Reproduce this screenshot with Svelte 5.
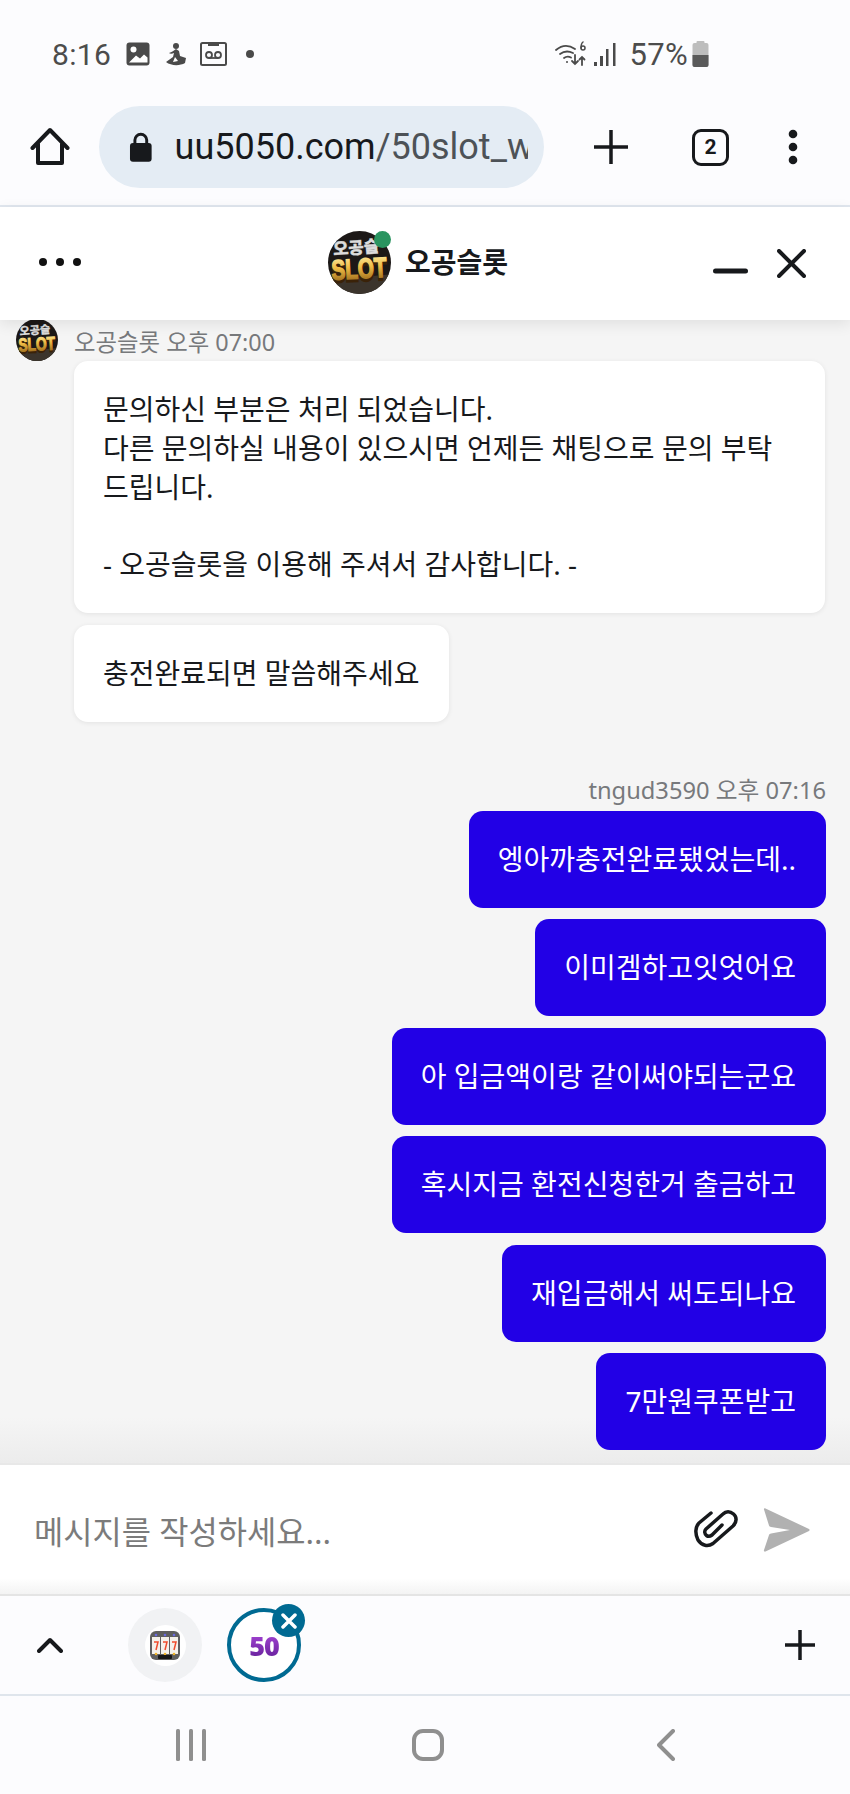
<script>
  const mine = ['엥아까충전완료됐었는데..', '이미겜하고잇엇어요', '아 입금액이랑 같이써야되는군요', '혹시지금 환전신청한거 출금하고', '재입금해서 써도되나요', '7만원쿠폰받고'];
</script>

{#snippet slotLogo(size)}
  <svg class="logo" width={size} height={size} viewBox="0 0 64 64" aria-hidden="true">
    <defs>
      <clipPath id="logo-clip-{size}"><circle cx="32" cy="32" r="32" /></clipPath>
      <linearGradient id="logo-gold-{size}" x1="0" y1="0" x2="0" y2="1">
        <stop offset="0" stop-color="#fff2b0" />
        <stop offset="0.45" stop-color="#f0bd45" />
        <stop offset="1" stop-color="#8d5c14" />
      </linearGradient>
    </defs>
    <g clip-path="url(#logo-clip-{size})">
      <rect width="64" height="64" fill="#1c1817" />
      <path d="M0 50L64 44V64H0z" fill="#3b342c" />
      <text x="29" y="23" class="logo-top" text-anchor="middle" transform="rotate(-4 29 23)">오공슬</text>
      <g transform="rotate(-3 32 48) translate(32 48) scale(1 1.350) translate(-32 -48)">
        <text x="32" y="50" class="logo-shadow" text-anchor="middle">SLOT</text>
        <text x="32" y="48" class="logo-main" text-anchor="middle" fill="url(#logo-gold-{size})" stroke="url(#logo-gold-{size})" stroke-width="1.200">SLOT</text>
      </g>
    </g>
  </svg>
{/snippet}

<div class="phone">
  <header class="browser">
    <div class="status">
      <div class="status-left">
        <span class="time">8:16</span>
        <svg width="24" height="24" viewBox="0 0 24 24"><rect x="0.500" y="0.500" width="23" height="23" rx="3" fill="#4a4a4a" /><circle cx="7.500" cy="7.500" r="3" fill="#fff" /><path d="M3 20.500l7-7 4 3 4-4 3.500 3v5z" fill="#fff" /></svg>
        <svg class="gap-icon" width="22" height="24" viewBox="0 0 22 24"><circle cx="11" cy="4" r="3" fill="#4a4a4a" /><path d="M11 7c-2 1-3 3-7 4 1 1 3 1 5 0l-1 4-7 5c5 4 14 4 19 1l1-5-6-2-1-5z" fill="#4a4a4a" /><path d="M10 15l3 4-5 1z" fill="#fff" /></svg>
        <svg class="gap-icon cassette" width="27" height="24" viewBox="0 0 27 24"><rect x="1" y="1" width="25" height="22" rx="1.500" fill="none" stroke="#4a4a4a" stroke-width="2" /><rect x="8" y="1" width="11" height="3" fill="#4a4a4a" /><circle cx="9" cy="13" r="3" fill="none" stroke="#4a4a4a" stroke-width="1.800" /><circle cx="18" cy="13" r="3" fill="none" stroke="#4a4a4a" stroke-width="1.800" /><path d="M9 16h9" stroke="#4a4a4a" stroke-width="1.800" /></svg>
        <span class="dot"></span>
      </div>
      <div class="status-right">
        <svg width="32" height="26" viewBox="0 0 32 26" fill="none" stroke="#4a4a4a" stroke-width="1.800" stroke-linecap="round">
          <path d="M1 9c6-5 13-5 19-1" /><path d="M5 13c4-3 9-3 13-1" /><path d="M9 17c2-1.500 5-1.500 7-.5" />
          <circle cx="12" cy="21" r="1" fill="#4a4a4a" stroke="none" />
          <path d="M20 14v9m-3-3l3 3 3-3" /><path d="M27 24v-8m-2.500 2.500l2.500-2.500 2.500 2.500" />
          <circle cx="28" cy="7" r="2" stroke-width="1.500" /><path d="M28 1c-1.500 1-2 2.500-2 6" stroke-width="1.500" />
        </svg>
        <svg class="signal" width="22" height="26" viewBox="0 0 22 26" fill="#4a4a4a"><rect x="0" y="21" width="3" height="4" /><rect x="6" y="15" width="3" height="10" /><rect x="12" y="8" width="2.500" height="17" /><rect x="19" y="2" width="2.500" height="23" /></svg>
        <span class="time pct">57%</span>
        <svg width="17" height="26" viewBox="0 0 17 26"><rect x="4.500" y="0" width="8" height="3" rx="1" fill="#bdbdbd" /><rect x="0.500" y="2" width="16" height="24" rx="2" fill="#bdbdbd" /><path d="M.5 14h16v10a2 2 0 0 1-2 2h-12a2 2 0 0 1-2-2z" fill="#5a5a5a" /></svg>
      </div>
    </div>
    <div class="toolbar">
      <svg class="home" width="40" height="40" viewBox="0 0 40 40" fill="none" stroke="#17191c" stroke-width="4" stroke-linejoin="round" stroke-linecap="round"><path d="M2.500 21L20 3l17.500 18" /><path d="M8 17v19h24V17" /></svg>
      <div class="url">
        <svg width="24" height="30" viewBox="0 0 24 30"><path d="M6 13V8a6 6 0 0 1 12 0v5" fill="none" stroke="#17191c" stroke-width="3" /><rect x="1" y="11" width="22" height="19" rx="3" fill="#17191c" /></svg>
        <span class="url-text"><span class="host">uu5050.com</span>/50slot_w</span>
      </div>
      <svg class="plus" width="34" height="34" viewBox="0 0 34 34" stroke="#17191c" stroke-width="3.500"><path d="M0 17h34M17 0v34" /></svg>
      <div class="tabs-count">2</div>
      <svg class="kebab" width="12" height="36" viewBox="0 0 12 36" fill="#17191c"><circle cx="6" cy="5" r="4.300" /><circle cx="6" cy="18" r="4.300" /><circle cx="6" cy="31" r="4.300" /></svg>
    </div>
  </header>

  <div class="chat-head">
    <div class="more"><span></span><span></span><span></span></div>
    <div class="title">
      <div class="avatar">
        {@render slotLogo(63)}
        <span class="online"></span>
      </div>
      <strong>오공슬롯</strong>
    </div>
    <div class="head-actions">
      <svg width="35" height="6" viewBox="0 0 35 6"><rect y="0.500" width="35" height="5" rx="2.500" fill="#17191c" /></svg>
      <svg width="29" height="29" viewBox="0 0 29 29" stroke="#17191c" stroke-width="4" stroke-linecap="round"><path d="M2 2l25 25M27 2L2 27" /></svg>
    </div>
  </div>

  <main class="messages">
    <div class="agent-meta">
      {@render slotLogo(42)}
      <span>오공슬롯 오후 07:00</span>
    </div>
    <div class="bubble theirs wide">문의하신 부분은 처리 되었습니다.<br />다른 문의하실 내용이 있으시면 언제든 채팅으로 문의 부탁 드립니다.<br /><br />- 오공슬롯을 이용해 주셔서 감사합니다. -</div>
    <div class="bubble theirs">충전완료되면 말씀해주세요</div>
    <div class="my-meta">tngud3590 오후 07:16</div>
    {#each mine as text}
      <div class="bubble mine">{text}</div>
    {/each}
  </main>

  <div class="composer">
    <span class="placeholder">메시지를 작성하세요...</span>
    <svg class="clip" width="44" height="40" viewBox="0 0 44 40" fill="none" stroke="#17191c" stroke-width="3.500" stroke-linecap="round" stroke-linejoin="round">
      <path d="M17 3L5 13C1 17 1 24 4 30C8 36 14 37 19 33.500L39 16C43 12 43 7 39.500 4C36 1 32 1 29 4L12 19C10 21 10.500 24 12.500 25.500C14.500 27 16 26.500 18 25L28 15" />
    </svg>
    <svg class="send" width="48" height="44" viewBox="0 0 48 44"><path d="M2 1.500c-.500-1 .500-1.500 1.500-1L47 21c.8.5.8 1.500 0 2L3.500 43.500c-1 .5-2-.5-1.500-1.500l5-15c.500-1 1-1.300 2-1.500L28 22 9 19c-1-.2-1.500-.5-2-1.500z" fill="#b1b1b1" /></svg>
  </div>

  <div class="tabbar">
    <svg class="chev" width="26" height="16" viewBox="0 0 26 16" fill="none" stroke="#17191c" stroke-width="4" stroke-linecap="round" stroke-linejoin="round"><path d="M2 14L13 3l11 11" /></svg>
    <div class="bubble-head slots">
      <span class="slots-inner">
        <svg width="30" height="30" viewBox="0 0 30 30">
          <rect x="0" y="1" width="30" height="29" rx="6" fill="#5f5f5f" />
          <rect x="2" y="7" width="8" height="17" fill="#f4f1ea" /><rect x="11" y="7" width="8" height="17" fill="#f4f1ea" /><rect x="20" y="7" width="8" height="17" fill="#f4f1ea" />
          <path d="M4 12h4l-2 8M13 12h4l-2 8M22 12h4l-2 8" fill="none" stroke="#ef4c2c" stroke-width="1.500" />
          <circle cx="6" cy="5" r="1.300" fill="#6a6ae0" /><circle cx="15" cy="5" r="1.300" fill="#6a6ae0" /><circle cx="24" cy="5" r="1.300" fill="#6a6ae0" />
          <circle cx="6" cy="24" r="1.300" fill="#f0b429" /><circle cx="15" cy="24" r="1.300" fill="#f0b429" /><circle cx="24" cy="24" r="1.300" fill="#f0b429" />
          <rect x="8" y="25" width="14" height="4" rx="1" fill="#161616" />
        </svg>
      </span>
    </div>
    <div class="bubble-head fifty">
      <span class="fifty-text">50</span>
      <span class="badge">
        <svg width="16" height="16" viewBox="0 0 16 16" stroke="#fff" stroke-width="3.500" stroke-linecap="round"><path d="M2 2l12 12M14 2L2 14" /></svg>
      </span>
    </div>
    <svg class="tab-plus" width="30" height="30" viewBox="0 0 30 30" stroke="#17191c" stroke-width="3.500"><path d="M0 15h30M15 0v30" /></svg>
  </div>

  <nav class="sysnav">
    <svg width="30" height="32" viewBox="0 0 30 32" fill="#8f8f8f"><rect x="0" y="0" width="4" height="32" rx="1.500" /><rect x="13" y="0" width="4" height="32" rx="1.500" /><rect x="26" y="0" width="4" height="32" rx="1.500" /></svg>
    <svg width="32" height="32" viewBox="0 0 32 32" fill="none" stroke="#8f8f8f" stroke-width="4"><rect x="2" y="2" width="28" height="28" rx="9" /></svg>
    <svg width="18" height="32" viewBox="0 0 18 32" fill="none" stroke="#8f8f8f" stroke-width="4" stroke-linecap="round" stroke-linejoin="round"><path d="M16 2L2 16l14 14" /></svg>
  </nav>
</div>

<style>
  :global(body) {
    margin: 0;
    background: #fcfcfe;
  }

  .phone {
    width: 850px;
    height: 1794px;
    display: flex;
    flex-direction: column;
    overflow: hidden;
    font-family: 'Noto Sans', 'Noto Sans CJK KR', sans-serif;
    color: #17191c;
  }

  .browser {
    height: 205px;
    flex: none;
    background: #fcfcfe;
    border-bottom: 2px solid #e1e7ef;
  }
  .status {
    height: 105px;
    box-sizing: border-box;
    padding: 36px 141px 0 52px;
    display: flex;
    justify-content: space-between;
    align-items: flex-start;
  }
  .status-left,
  .status-right {
    display: flex;
    align-items: center;
    height: 36px;
  }
  .time {
    font-family: Roboto, sans-serif;
    font-size: 30px;
    color: #4c4c4c;
    letter-spacing: 0.3px;
    margin-right: 15px;
  }
  .pct {
    font-size: 31px;
    margin: 0 4px 0 14px;
  }
  .gap-icon {
    margin-left: 15px;
  }
  .cassette {
    margin-left: 13px;
  }
  .dot {
    width: 8px;
    height: 8px;
    border-radius: 50%;
    background: #4a4a4a;
    margin-left: 19px;
  }
  .signal {
    margin-left: 7px;
  }

  .toolbar {
    height: 84px;
    display: flex;
    align-items: center;
    padding-left: 30px;
  }
  .url {
    width: 445px;
    height: 82px;
    margin-left: 29px;
    box-sizing: border-box;
    padding: 0 16px 0 30px;
    border-radius: 41px;
    background: #e4ecf4;
    display: flex;
    align-items: center;
    gap: 22px;
    overflow: hidden;
  }
  .url-text {
    font-family: Roboto, sans-serif;
    font-size: 36px;
    color: #4d5257;
    white-space: nowrap;
    overflow: hidden;
  }
  .host {
    color: #17191c;
  }
  .plus {
    margin-left: 50px;
  }
  .tabs-count {
    box-sizing: border-box;
    width: 37px;
    height: 37px;
    margin-left: 64px;
    display: flex;
    align-items: center;
    justify-content: center;
    border: 3.500px solid #17191c;
    border-radius: 9px;
    font-family: Roboto, sans-serif;
    font-weight: 700;
    font-size: 21px;
  }
  .kebab {
    margin-left: 58px;
  }

  .chat-head {
    position: relative;
    z-index: 2;
    height: 113px;
    flex: none;
    background: #fff;
    box-shadow: 0 4px 14px rgba(0, 0, 0, 0.09);
    display: flex;
    align-items: center;
    justify-content: space-between;
    padding: 0 44px 0 39px;
  }
  .more {
    display: flex;
    gap: 9px;
    margin-bottom: 4px;
  }
  .more span {
    width: 8px;
    height: 8px;
    border-radius: 50%;
    background: #111;
  }
  .title {
    position: absolute;
    left: 328px;
    top: 24px;
    display: flex;
    align-items: center;
    gap: 14px;
  }
  .title strong {
    font-size: 28px;
    font-weight: 700;
    margin-bottom: 4px;
  }
  .avatar {
    position: relative;
    width: 63px;
    height: 63px;
  }
  .logo {
    display: block;
    flex: none;
  }
  .logo-top {
    font-size: 17px;
    font-weight: 900;
    fill: #dcdcdc;
    stroke: #dcdcdc;
    stroke-width: 0.400;
  }
  .logo-main,
  .logo-shadow {
    font-family: 'Liberation Sans', sans-serif;
    font-size: 21px;
    font-weight: 700;
  }
  .logo-shadow {
    fill: #3a2208;
    stroke: #3a2208;
    stroke-width: 2;
  }
  .online {
    position: absolute;
    top: -0.5px;
    right: 0;
    width: 17px;
    height: 17px;
    border-radius: 50%;
    background: #2a9460;
  }
  .head-actions {
    display: flex;
    align-items: center;
    gap: 29px;
  }
  .head-actions svg:first-child {
    margin-top: 15px;
  }

  .messages {
    flex: 1;
    min-height: 0;
    background: linear-gradient(#f5f5f5 96%, #ececec);
    padding: 0 24px 0 16px;
    display: flex;
    flex-direction: column;
  }
  .agent-meta {
    flex: none;
    display: flex;
    gap: 16px;
    height: 41px;
    overflow: hidden;
    align-items: flex-end;
  }
  .agent-meta span {
    font-size: 23.400px;
    line-height: 32px;
    color: #77797c;
    margin-bottom: 3px;
  }
  .bubble {
    flex: none;
    box-sizing: border-box;
    font-size: 28px;
    line-height: 38.800px;
    padding: 29px 30px 29px 29px;
    border-radius: 14px;
    word-break: keep-all;
  }
  .theirs {
    align-self: flex-start;
    margin-left: 58px;
    background: #fff;
    box-shadow: 0 1px 5px rgba(0, 0, 0, 0.08);
    margin-bottom: 12px;
  }
  .wide {
    width: 751px;
  }
  .my-meta {
    flex: none;
    align-self: flex-end;
    font-size: 23.700px;
    line-height: 32px;
    color: #77797c;
    margin: 40px 0 5px;
  }
  .mine {
    align-self: flex-end;
    background: #2200e6;
    color: #fff;
    margin-bottom: 11.700px;
  }

  .composer {
    height: 133px;
    flex: none;
    box-sizing: border-box;
    background: linear-gradient(#fff 88%, #f3f3f3);
    border-top: 2px solid #e8e8e8;
    border-bottom: 2px solid #e4e4e4;
    display: flex;
    align-items: center;
    padding: 0 40px 0 34px;
  }
  .placeholder {
    font-size: 31.800px;
    color: #7b7b7b;
    flex: 1;
  }
  .send {
    margin-left: 24px;
  }

  .tabbar {
    position: relative;
    height: 100px;
    flex: none;
    box-sizing: border-box;
    border-bottom: 2px solid #dfe5ec;
    display: flex;
    align-items: center;
    padding-left: 37px;
  }
  .bubble-head {
    position: relative;
    width: 74px;
    height: 74px;
    box-sizing: border-box;
    border-radius: 50%;
    display: flex;
    align-items: center;
    justify-content: center;
    flex: none;
  }
  .slots {
    background: #f1f2f4;
    margin-left: 65px;
  }
  .slots-inner {
    width: 41px;
    height: 41px;
    border-radius: 50%;
    background: #fff;
    display: flex;
    align-items: center;
    justify-content: center;
  }
  .fifty {
    margin-left: 25px;
    background: #fff;
    border: 4px solid #006a92;
  }
  .fifty-text {
    font-family: 'Open Sans', sans-serif;
    font-weight: 800;
    font-size: 27px;
    letter-spacing: -1px;
    background: linear-gradient(#b14be0, #5a1a90);
    -webkit-background-clip: text;
    background-clip: text;
    color: transparent;
  }
  .badge {
    position: absolute;
    top: -8px;
    right: -8px;
    width: 33px;
    height: 33px;
    border-radius: 50%;
    background: #006a92;
    display: flex;
    align-items: center;
    justify-content: center;
  }
  .tab-plus {
    margin-left: auto;
    margin-right: 35px;
  }

  .sysnav {
    flex: none;
    height: 98px;
    display: flex;
    align-items: center;
    padding-left: 176px;
  }
  .sysnav svg:nth-child(2) {
    margin-left: 206px;
  }
  .sysnav svg:nth-child(3) {
    margin-left: 213px;
  }
</style>
